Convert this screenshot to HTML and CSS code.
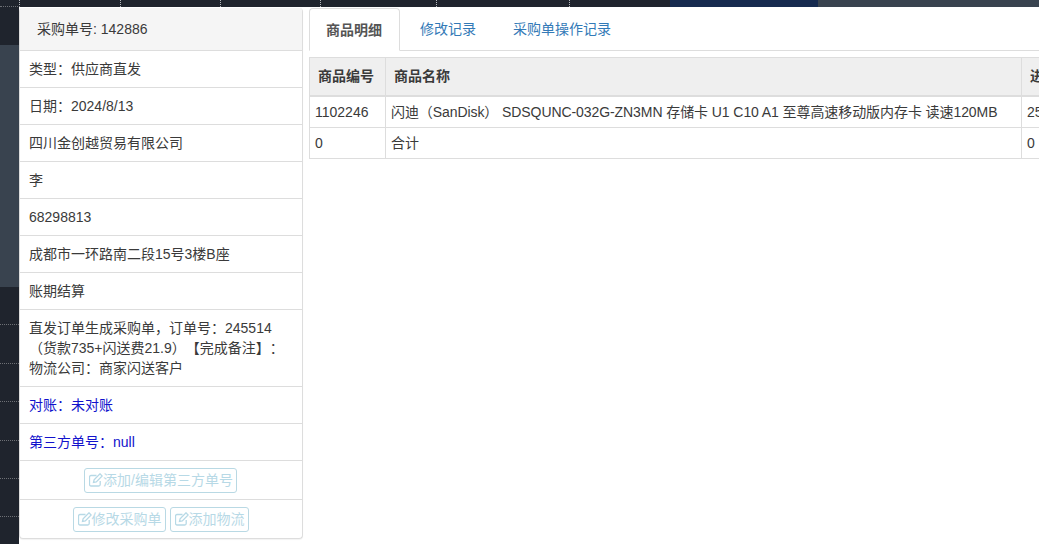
FILE: index.html
```html
<!DOCTYPE html>
<html lang="en">
<head>
  <meta charset="UTF-8" />
  <title>采购单详情</title>
  <link rel="stylesheet" href="styles.css">
</head>
<body>

  <!-- Backdrop: the page behind the dialog -->
  <div class="backdrop">
    <div class="backdrop-strip">
      <i></i><i></i><i></i><i></i><i></i><i></i>
      <b class="strip-navy"></b>
      <b class="strip-slate"></b>
    </div>
    <div class="backdrop-side">
      <div class="side-top"></div>
      <div class="side-mid"></div>
      <div class="side-bottom">
        <span></span><span></span><span></span><span></span><span></span><span></span>
      </div>
    </div>
  </div>

  <div class="content">
    <!-- Order info panel -->
    <aside class="panel">
      <div class="panel-heading">采购单号: 142886</div>
      <ul class="info-list">
        <li>类型：供应商直发</li>
        <li>日期：2024/8/13</li>
        <li>四川金创越贸易有限公司</li>
        <li>李</li>
        <li>68298813</li>
        <li>成都市一环路南二段15号3楼B座</li>
        <li>账期结算</li>
        <li>直发订单生成采购单，订单号：245514<br>（货款735+闪送费21.9）【完成备注】：<br>物流公司：商家闪送客户</li>
        <li class="blue">对账：未对账</li>
        <li class="blue">第三方单号：null</li>
        <li class="actions">
          <a class="btn-edit">
            <svg class="icon" viewBox="0 0 14 14"><path d="M11.200 8v3.500a1.500 1.500 0 0 1-1.500 1.500H2a1.500 1.500 0 0 1-1.500-1.500V4A1.500 1.500 0 0 1 2 2.500h5.500" /><path d="M4.500 9.500l.6-2.800L11 .8l2.200 2.200-5.900 5.900z" /></svg>添加/编辑第三方单号
          </a>
        </li>
        <li class="actions last">
          <a class="btn-edit">
            <svg class="icon" viewBox="0 0 14 14"><path d="M11.200 8v3.500a1.500 1.500 0 0 1-1.500 1.500H2a1.500 1.500 0 0 1-1.500-1.500V4A1.500 1.500 0 0 1 2 2.500h5.500" /><path d="M4.500 9.500l.6-2.800L11 .8l2.200 2.200-5.900 5.900z" /></svg>修改采购单
          </a>
          <a class="btn-edit">
            <svg class="icon" viewBox="0 0 14 14"><path d="M11.200 8v3.500a1.500 1.500 0 0 1-1.500 1.500H2a1.500 1.500 0 0 1-1.500-1.500V4A1.500 1.500 0 0 1 2 2.500h5.500" /><path d="M4.500 9.500l.6-2.800L11 .8l2.200 2.200-5.900 5.900z" /></svg>添加物流
          </a>
        </li>
      </ul>
    </aside>

    <!-- Tabs and goods table -->
    <main class="main">
      <ul class="tabs">
        <li class="tab active">商品明细</li>
        <li class="tab">修改记录</li>
        <li class="tab">采购单操作记录</li>
      </ul>
      <table class="goods">
        <thead>
          <tr>
            <th class="col-code">商品编号</th>
            <th class="col-name">商品名称</th>
            <th class="col-price">进货价</th>
          </tr>
        </thead>
        <tbody>
          <tr>
            <td>1102246</td>
            <td class="name">闪迪（SanDisk） SDSQUNC-032G-ZN3MN 存储卡 U1 C10 A1 至尊高速移动版内存卡 读速120MB</td>
            <td>25</td>
          </tr>
          <tr>
            <td>0</td>
            <td>合计</td>
            <td>0</td>
          </tr>
        </tbody>
      </table>
    </main>
  </div>

</body>
</html>
```

FILE: styles.css
```css
/* Basic Reset */
* {
  margin: 0;
  padding: 0;
  box-sizing: border-box;
}
html, body {
  height: 544px;
  overflow: hidden;
}
body {
  position: relative;
  background-color: #fff;
  font-family: "Liberation Sans", Arial, "Noto Sans CJK SC", sans-serif;
  font-size: 14px;
  line-height: 20px;
  color: #3a3a3a;
  text-spacing-trim: space-all;
}

/* Backdrop behind the dialog */
.backdrop {
  position: absolute;
  top: 0; left: 0; right: 0; bottom: 0;
}
.backdrop-strip {
  height: 7px;
  background-color: #1f242d;
  display: flex;
}
.backdrop-strip i {
  height: 7px;
  border-right: 1px dotted #b5b8bc;
}
.backdrop-strip i:nth-child(1) {
  width: 20px;
  border-bottom: 1px dotted #6d7075;
}
.backdrop-strip i:nth-child(2) { width: 101px; }
.backdrop-strip i:nth-child(3) { width: 100px; }
.backdrop-strip i:nth-child(4) { width: 100px; }
.backdrop-strip i:nth-child(5) { width: 116px; }
.backdrop-strip i:nth-child(6) { width: 133px; }
.strip-navy {
  width: 148px;
  margin-left: 100px;
  background-color: #162a4f;
}
.strip-slate {
  flex: 1;
  background-color: #39434f;
}
.backdrop-side {
  width: 19px;
  height: 537px;
  display: flex;
  flex-direction: column;
}
.side-top {
  height: 38px;
  background-color: #1f242d;
}
.side-mid {
  height: 242px;
  background-color: #39434f;
}
.side-bottom {
  flex: 1;
  background-color: #1f242d;
}
.side-bottom span {
  display: block;
  height: 38.4px;
  border-bottom: 1px dotted #6d7075;
}

/* Page layout */
.content {
  position: relative;
  display: flex;
  align-items: flex-start;
  background-color: #fff;
  margin: 7px 0 0 19px;
  height: 537px;
  padding-top: 1px;
}

/* Left info panel */
.panel {
  width: 284px;
  flex-shrink: 0;
  background-color: #fff;
  border: 1px solid #ddd;
  border-top: 0;
  border-radius: 4px;
  box-shadow: 0 1px 1px rgba(0,0,0,.05);
}
.panel-heading {
  height: 43px;
  padding: 11px 17px 0;
  background-color: #f5f5f5;
  border-bottom: 1px solid #ddd;
  border-radius: 3px 3px 0 0;
}
.info-list {
  list-style: none;
}
.info-list li {
  padding: 8px 9px;
  min-height: 37px;
  border-bottom: 1px solid #ddd;
}
.info-list li.blue {
  color: #1212cc;
}
.info-list li.actions {
  height: 39px;
  padding: 7px 1px 0 0;
  display: flex;
  justify-content: center;
  gap: 4px;
}
.info-list li.last {
  height: 38px;
  border-bottom: 0;
}
.btn-edit {
  display: flex;
  align-items: center;
  height: 25px;
  padding: 0 3px 1px 4px;
  color: #b7d9e6;
  border: 1px solid #b9d9e4;
  border-radius: 3px;
}
.icon {
  width: 14px;
  height: 14px;
  fill: none;
  stroke: #b7d9e6;
  stroke-width: 1.3;
}

/* Tabs and table */
.main {
  flex: 1;
  min-width: 0;
  margin-left: 6px;
  overflow: hidden;
}
.tabs {
  list-style: none;
  display: flex;
  height: 43px;
  border-bottom: 1px solid #ddd;
}
.tab {
  padding: 11px 17px 0;
  margin-right: 3px;
  color: #337ab7;
}
.tab.active {
  height: 43px;
  padding-left: 16px;
  color: #555;
  font-weight: bold;
  background-color: #fff;
  border: 1px solid #ddd;
  border-bottom-color: #fff;
  border-radius: 4px 4px 0 0;
}
.goods {
  width: 761px;
  margin-top: 6px;
  table-layout: fixed;
  border-collapse: collapse;
}
.goods th, .goods td {
  border: 1px solid #ddd;
  padding: 5px;
  text-align: left;
  white-space: nowrap;
  overflow: hidden;
}
.goods th {
  height: 38px;
  padding: 8px;
  background-color: #efefef;
  border-bottom-width: 2px;
}
.goods td {
  height: 31px;
}
.goods td.name {
  letter-spacing: -0.08px;
}
.col-code { width: 76px; }
.col-name { width: 636px; }
.col-price { width: 49px; }
```
